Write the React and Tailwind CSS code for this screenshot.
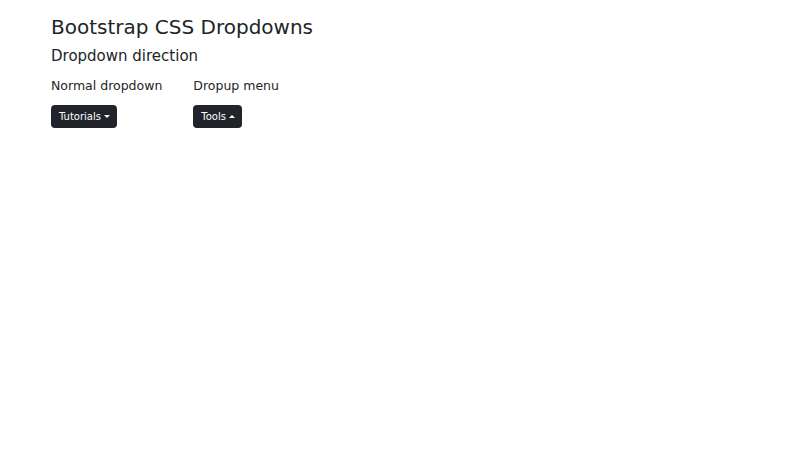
import React from 'react';

const Caret = ({ up }) => (
  <span
    className={
      up
        ? 'ml-[3px] inline-block align-[2px] border-x-[3px] border-x-transparent border-b-[3px] border-b-white'
        : 'ml-[3px] inline-block align-[2px] border-x-[3px] border-x-transparent border-t-[3px] border-t-white'
    }
  />
);

const DropButton = ({ label, up }) => (
  <button className="h-[23px] pl-[8px] pr-[7px] rounded-[4px] bg-[#212529] text-white text-[10px] leading-none flex items-center">
    {label}
    <Caret up={up} />
  </button>
);

export default function App() {
  return (
    <div className="min-h-screen bg-white text-[#212529] px-[51px] pt-[14px]" style={{ fontFamily: '"DejaVu Sans", sans-serif' }}>
      <h1 className="text-[20px] leading-[26px]">Bootstrap CSS Dropdowns</h1>
      <h2 className="text-[15px] leading-[20px] mt-[6px]">Dropdown direction</h2>
      <div className="flex gap-[31px] mt-[11px]">
        <div>
          <p className="text-[12.5px] leading-[18px]">Normal dropdown</p>
          <div className="mt-[10px]">
            <DropButton label="Tutorials" />
          </div>
        </div>
        <div>
          <p className="text-[12.5px] leading-[18px]">Dropup menu</p>
          <div className="mt-[10px]">
            <DropButton label="Tools" up />
          </div>
        </div>
      </div>
    </div>
  );
}
